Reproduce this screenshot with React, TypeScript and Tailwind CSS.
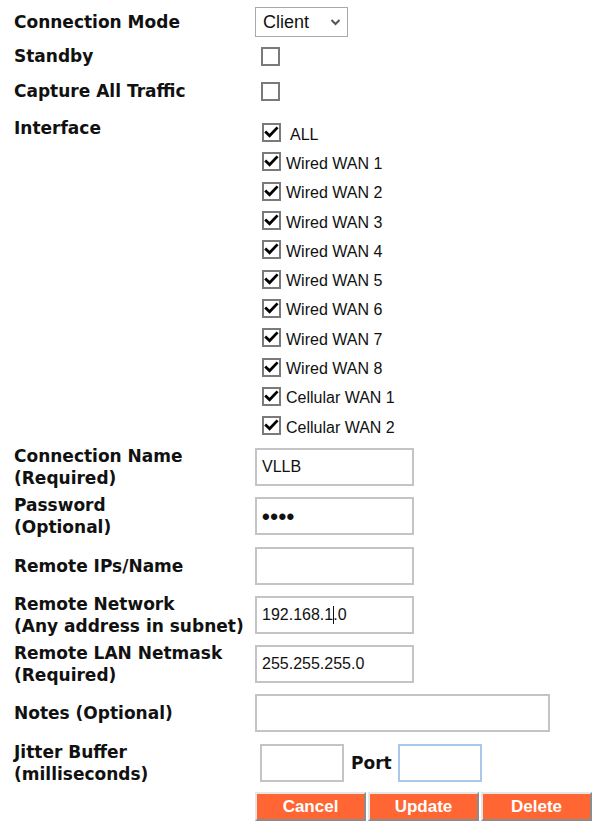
import React from "react";

const wans = [
  "Wired WAN 1",
  "Wired WAN 2",
  "Wired WAN 3",
  "Wired WAN 4",
  "Wired WAN 5",
  "Wired WAN 6",
  "Wired WAN 7",
  "Wired WAN 8",
  "Cellular WAN 1",
  "Cellular WAN 2",
];

const labelFont = "font-['DejaVu_Sans',Verdana,sans-serif] text-[17px] font-bold leading-[22px] text-[#111] whitespace-nowrap";
const fieldFont = "font-['Liberation_Sans',Arial,sans-serif] text-[16px] text-[#111]";

function Box({ checked }: { checked?: boolean }) {
  return (
    <span className="flex h-[19px] w-[19px] shrink-0 items-center justify-center border-2 border-[#7a7a7a] bg-white">
      {checked && (
        <svg width="15" height="15" viewBox="0 0 15 15">
          <polyline
            points="2.2,7.4 5.6,10.8 12.6,3.4"
            fill="none"
            stroke="#000"
            strokeWidth="2.8"
            strokeLinecap="square"
          />
        </svg>
      )}
    </span>
  );
}

function TextBox({ value, className = "w-[159px]" }: { value?: React.ReactNode; className?: string }) {
  return (
    <div className={`flex h-[38px] items-center border-2 border-[#c4c4c6] bg-white px-[5px] ${fieldFont} ${className}`}>
      {value}
    </div>
  );
}

function Label({ children }: { children: React.ReactNode }) {
  return <div className={`w-[241px] shrink-0 ${labelFont}`}>{children}</div>;
}

function FieldRow({ label, children }: { label: React.ReactNode; children: React.ReactNode }) {
  return (
    <div className="flex h-[49.3px] items-center">
      <Label>{label}</Label>
      {children}
    </div>
  );
}

function OrangeButton({ children }: { children: React.ReactNode }) {
  return (
    <button className="flex h-[29px] w-[111px] items-center justify-center border-2 border-t-[#e6e6e6] border-l-[#e6e6e6] border-r-[#8c8c8c] border-b-[#8c8c8c] bg-[#ff6633] font-['Liberation_Sans',Arial,sans-serif] text-[17px] font-bold text-white">
      {children}
    </button>
  );
}

export default function App() {
  return (
    <div className="min-h-[837px] w-[606px] bg-white pl-[14px] pt-[7px]">
      {/* mode select */}
      <div className="flex h-[30px] items-center">
        <Label>Connection Mode</Label>
        <div className="flex h-[30px] w-[93px] items-center justify-between border border-[#a9a9a9] bg-white pl-[7px] pr-[6px]">
          <span className="font-['Liberation_Sans',Arial,sans-serif] text-[18px] text-[#111]">Client</span>
          <svg width="11" height="8" viewBox="0 0 11 8">
            <polyline points="1.5,2 5.5,6 9.5,2" fill="none" stroke="#555" strokeWidth="2" />
          </svg>
        </div>
      </div>

      <div className="mt-[4px] flex h-[30px] items-center">
        <Label>Standby</Label>
        <div className="pl-[6px]">
          <Box />
        </div>
      </div>

      <div className="mt-[5px] flex h-[30px] items-center">
        <Label>Capture All Traffic</Label>
        <div className="pl-[6px]">
          <Box />
        </div>
      </div>

      {/* interface list */}
      <div className="mt-[11px] flex">
        <Label>Interface</Label>
        <div className="flex flex-col pl-[7px] pt-[1px]">
          <div className="flex h-[29.3px] items-center gap-[9px]">
            <Box checked />
            <span className={`${fieldFont} pt-[5px]`}>ALL</span>
          </div>
          {wans.map((w) => (
            <div key={w} className="flex h-[29.3px] items-center gap-[5px]">
              <Box checked />
              <span className={`${fieldFont} pt-[4px]`}>{w}</span>
            </div>
          ))}
        </div>
      </div>

      <div className="mt-[2px]">
        <FieldRow label={<>Connection Name<br />(Required)</>}>
          <TextBox value="VLLB" />
        </FieldRow>
        <FieldRow label={<>Password<br />(Optional)</>}>
          <TextBox value="••••" className="w-[159px] text-[22px] font-bold tracking-[0.5px]" />
        </FieldRow>
        <FieldRow label="Remote IPs/Name">
          <TextBox />
        </FieldRow>
        <FieldRow label={<>Remote Network<br />(Any address in subnet)</>}>
          <TextBox
            value={
              <>
                192.168.1<span className="-mr-px inline-block h-[18px] w-px bg-[#111]" />.0
              </>
            }
          />
        </FieldRow>
        <FieldRow label={<>Remote LAN Netmask<br />(Required)</>}>
          <TextBox value="255.255.255.0" />
        </FieldRow>
        <FieldRow label="Notes (Optional)">
          <TextBox className="w-[295px]" />
        </FieldRow>
        <FieldRow label={<>Jitter Buffer<br />(milliseconds)</>}>
          <div className="flex items-center pl-[5px]">
            <TextBox className="w-[84px]" />
            <span className={`${labelFont} ml-[7px] mr-[6px]`}>Port</span>
            <div className="h-[38px] w-[84px] border-2 border-[#a8c8ec] bg-white" />
          </div>
        </FieldRow>
      </div>

      <div className="mt-[5px] flex gap-[2px] pl-[241px]">
        <OrangeButton>Cancel</OrangeButton>
        <OrangeButton>Update</OrangeButton>
        <OrangeButton>Delete</OrangeButton>
      </div>
    </div>
  );
}
